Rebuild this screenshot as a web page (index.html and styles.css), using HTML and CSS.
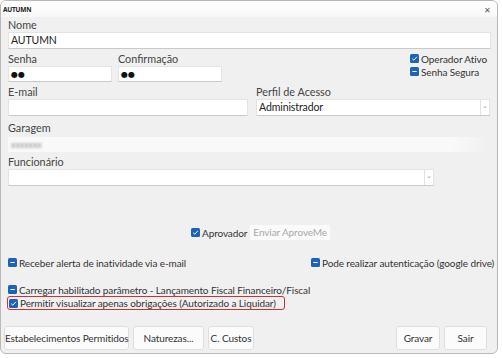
FILE: index.html
```html
<!DOCTYPE html>
<html lang="pt">
<head>
<meta charset="utf-8">
<link rel="stylesheet" href="styles.css">
</head>
<body>
<div class="window">
  <div class="titlebar">
    <span class="title">AUTUMN</span>
    <span class="close">✕</span>
  </div>
  <div class="content">
    <div class="label">Nome</div>
    <div class="input full">AUTUMN</div>

    <div class="row senha-row">
      <div class="col">
        <div class="label">Senha</div>
        <div class="input pw">●●</div>
      </div>
      <div class="col">
        <div class="label">Confirmação</div>
        <div class="input pw">●●</div>
      </div>
      <div class="checks-right">
        <div class="check"><svg class="cb" viewBox="0 0 9 9"><rect width="9" height="9" rx="1.5" fill="#1b63b7"/><path d="M2.2 4.7 L3.8 6.2 L6.9 2.8" stroke="#fff" stroke-width="1" fill="none"/></svg>Operador Ativo</div>
        <div class="check"><svg class="cb" viewBox="0 0 9 9"><rect width="9" height="9" rx="1.5" fill="#1b63b7"/><path d="M2.3 4.5 H6.7" stroke="#fff" stroke-width="1.2"/></svg>Senha Segura</div>
      </div>
    </div>

    <div class="row email-row">
      <div class="col email-col">
        <div class="label">E-mail</div>
        <div class="input"></div>
      </div>
      <div class="col perfil-col">
        <div class="label">Perfil de Acesso</div>
        <div class="input select">Administrador<span class="arrow">⌄</span></div>
      </div>
    </div>

    <div class="label garagem-label">Garagem</div>
    <div class="garagem"><span class="blur">xxxxxxx</span></div>

    <div class="label func-label">Funcionário</div>
    <div class="input select func"><span class="arrow">⌄</span></div>

    <div class="aprov-row">
      <div class="check"><svg class="cb" viewBox="0 0 9 9"><rect width="9" height="9" rx="1.5" fill="#1b63b7"/><path d="M2.2 4.7 L3.8 6.2 L6.9 2.8" stroke="#fff" stroke-width="1" fill="none"/></svg>Aprovador</div>
      <div class="btn-disabled">Enviar AproveMe</div>
    </div>

    <div class="row receber-row">
      <div class="check"><svg class="cb" viewBox="0 0 9 9"><rect width="9" height="9" rx="1.5" fill="#1b63b7"/><path d="M2.3 4.5 H6.7" stroke="#fff" stroke-width="1.2"/></svg>Receber alerta de inatividade via e-mail</div>
      <div class="check"><svg class="cb" viewBox="0 0 9 9"><rect width="9" height="9" rx="1.5" fill="#1b63b7"/><path d="M2.3 4.5 H6.7" stroke="#fff" stroke-width="1.2"/></svg>Pode realizar autenticação (google drive)</div>
    </div>

    <div class="check carregar"><svg class="cb" viewBox="0 0 9 9"><rect width="9" height="9" rx="1.5" fill="#1b63b7"/><path d="M2.3 4.5 H6.7" stroke="#fff" stroke-width="1.2"/></svg>Carregar habilitado parâmetro - Lançamento Fiscal Financeiro/Fiscal</div>
    <div class="check permitir"><svg class="cb" viewBox="0 0 9 9"><rect width="9" height="9" rx="1.5" fill="#1b63b7"/><path d="M2.2 4.7 L3.8 6.2 L6.9 2.8" stroke="#fff" stroke-width="1" fill="none"/></svg>Permitir visualizar apenas obrigações (Autorizado a Liquidar)</div>

    <div class="buttons">
      <div class="left-btns">
        <div class="btn b-estab">Estabelecimentos Permitidos</div>
        <div class="btn b-nat">Naturezas...</div>
        <div class="btn b-cc">C. Custos</div>
      </div>
      <div class="right-btns">
        <div class="btn b-grav">Gravar</div>
        <div class="btn b-sair">Sair</div>
      </div>
    </div>
  </div>
</div>
</body>
</html>
```
FILE: styles.css
```css
* { box-sizing: border-box; }
html, body { margin: 0; padding: 0; background: #ffffff; }
body {
  font-family: "Lato", "Noto Sans", sans-serif;
  font-size: 10px;
  letter-spacing: -0.1px;
  color: #3a3a3a;
}
.window {
  width: 498px;
  height: 354px;
  background: #f0f0f0;
  border: 1px solid #b9b9b9;
  border-radius: 6px;
  overflow: hidden;
  display: flex;
  flex-direction: column;
}
.titlebar {
  height: 16px;
  background: linear-gradient(#ffffff, #f7f7f7);
  display: flex;
  align-items: center;
  justify-content: space-between;
  padding: 0 6px 0 2px;
  font-family: "Noto Sans", sans-serif;
}
.title { font-size: 6.5px; font-weight: bold; color: #222; letter-spacing: -0.2px; }
.close { font-size: 8px; color: #555; }
.content {
  padding: 1px 0 0 7px;
  display: flex;
  flex-direction: column;
  flex: 1;
}
.label { height: 14px; line-height: 14px; color: #444; font-size: 10.8px; letter-spacing: 0; }
.input {
  height: 17px;
  background: #fff;
  border: 1px solid #e4e4e4;
  border-bottom-color: #c9c9c9;
  line-height: 15px;
  padding-left: 2px;
  color: #222;
  font-size: 10.5px;
}
.full { width: 483px; }
.row { display: flex; }
.senha-row { margin-top: 3px; }
.senha-row .col:first-child { width: 110px; }
.pw {
  width: 104px;
  height: 16px;
  font-family: "DejaVu Sans", sans-serif;
  font-size: 8px;
  letter-spacing: 0;
  color: #111;
}
.checks-right {
  margin-left: auto;
  margin-right: 10px;
  display: flex;
  flex-direction: column;
}
.check { display: flex; align-items: center; height: 13px; white-space: nowrap; color: #333; }
.cb { width: 9px; height: 9px; margin-right: 2px; flex: none; }
.email-row { margin-top: 3px; }
.email-col { width: 248px; }
.email-col .input { width: 240px; }
.perfil-col .input { width: 234px; }
.select { position: relative; }
.arrow {
  position: absolute;
  right: 0;
  top: 0;
  bottom: 0;
  width: 9px;
  border-left: 1px solid #e2e2e2;
  font-size: 7px;
  color: #999;
  line-height: 11px;
  text-align: center;
}
.garagem-label { margin-top: 5px; }
.garagem {
  margin-top: 2px;
  width: 482px;
  height: 15px;
  background: linear-gradient(to right, #f9f9f9 0%, #f9f9f9 92%, #f0f0f0 100%);
  padding-left: 3px;
  line-height: 15px;
}
.blur { color: transparent; text-shadow: 0 0 2.5px #8a8a8a; font-size: 9px; }
.func-label { margin-top: 3px; }
.func { width: 426px; }
.aprov-row {
  display: flex;
  align-items: center;
  margin-top: 39px;
  padding-left: 183px;
  height: 15px;
}
.aprov-row .check { margin-right: 3px; }
.btn-disabled {
  background: #fafafa;
  color: #a9a9a9;
  height: 15px;
  line-height: 15px;
  padding: 0 3px;
}
.receber-row { margin-top: 16px; height: 13px; }
.receber-row .check:first-child { width: 303px; }
.carregar { margin-top: 14px; }
.permitir {
  margin-left: -1px;
  width: 278px;
  height: 14px;
  border: 1px solid #d32f2f;
  border-radius: 3px;
  padding-left: 1px;
}
.buttons {
  display: flex;
  justify-content: space-between;
  margin-top: 16px;
  margin-left: -4px;
  padding-right: 10px;
}
.left-btns, .right-btns { display: flex; gap: 4px; }
.btn {
  height: 24px;
  line-height: 22px;
  background: #fbfbfb;
  border: 1px solid #dedede;
  border-radius: 3px;
  text-align: center;
  color: #333;
  white-space: nowrap;
}
.b-estab { width: 125px; }
.b-nat { width: 71px; }
.b-cc { width: 46px; }
.b-grav { width: 44px; }
.b-sair { width: 43px; }
```
